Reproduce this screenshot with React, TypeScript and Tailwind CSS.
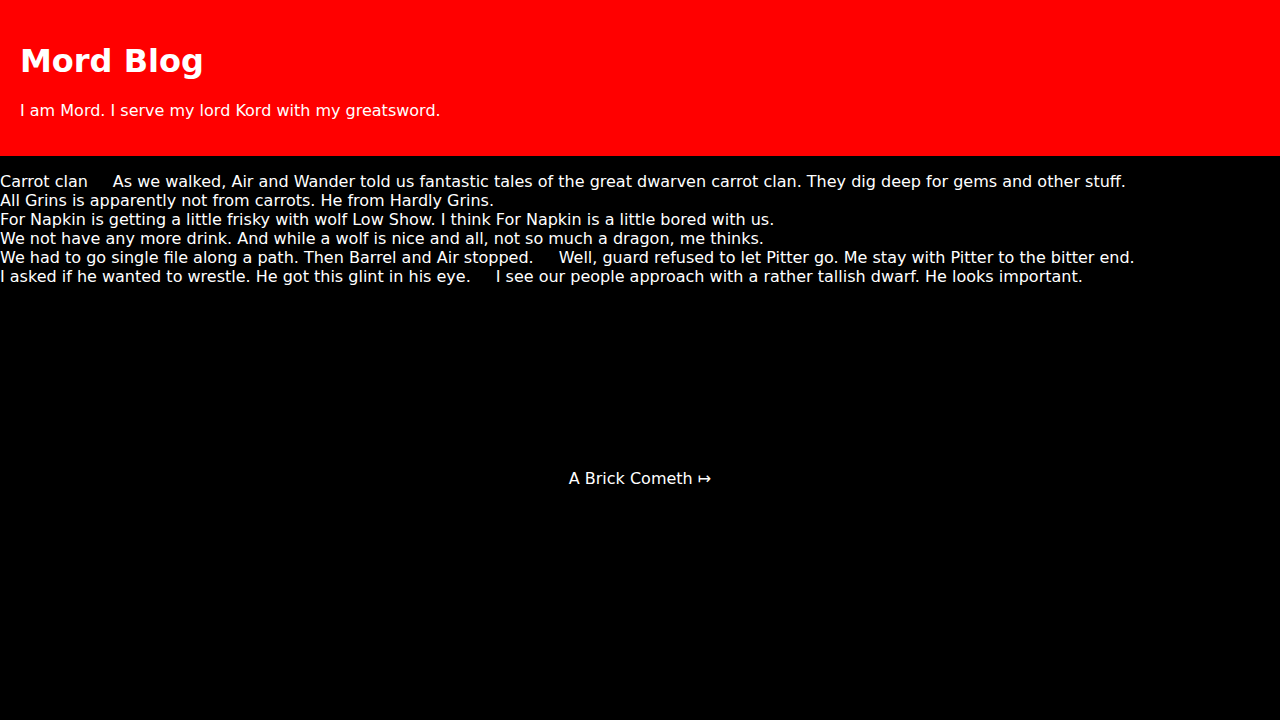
const posts: { title?: string; parts: string[] }[] = [
  {
    parts: [
      "Carrot clan",
      "As we walked, Air and Wander told us fantastic tales of the great dwarven carrot clan. They dig deep for gems and other stuff.",
    ],
  },
  { parts: ["All Grins is apparently not from carrots. He from Hardly Grins."] },
  {
    parts: [
      "For Napkin is getting a little frisky with wolf Low Show. I think For Napkin is a little bored with us.",
    ],
  },
  {
    parts: [
      "We not have any more drink. And while a wolf is nice and all, not so much a dragon, me thinks.",
    ],
  },
  {
    parts: [
      "We had to go single file along a path. Then Barrel and Air stopped.",
      "Well, guard refused to let Pitter go. Me stay with Pitter to the bitter end.",
    ],
  },
  {
    parts: [
      "I asked if he wanted to wrestle. He got this glint in his eye.",
      "I see our people approach with a rather tallish dwarf. He looks important.",
    ],
  },
];

function App() {
  return (
    <div className="min-h-screen bg-black text-white font-['DejaVu_Sans',sans-serif] text-[16px]">
      <header className="bg-[#ff0000] p-5">
        <h1 className="mt-[23px] mb-[21px] text-[32px] leading-[37px] font-bold">Mord Blog</h1>
        <p className="my-4 leading-[19px]">
          I am Mord. I serve my lord Kord with my greatsword.
        </p>
      </header>

      <div className="mt-4 leading-[19px]">
        {posts.map((post, i) => (
          <div key={i} className="whitespace-nowrap">
            {post.parts.map((part, j) => (
              <span key={j} className={j > 0 ? "ml-[25px]" : ""}>
                {part}
              </span>
            ))}
          </div>
        ))}
      </div>

      <div className="mt-[183px] text-center leading-[19px]">
        <a href="#">A Brick Cometh ↦</a>
      </div>
    </div>
  );
}

export default App;
